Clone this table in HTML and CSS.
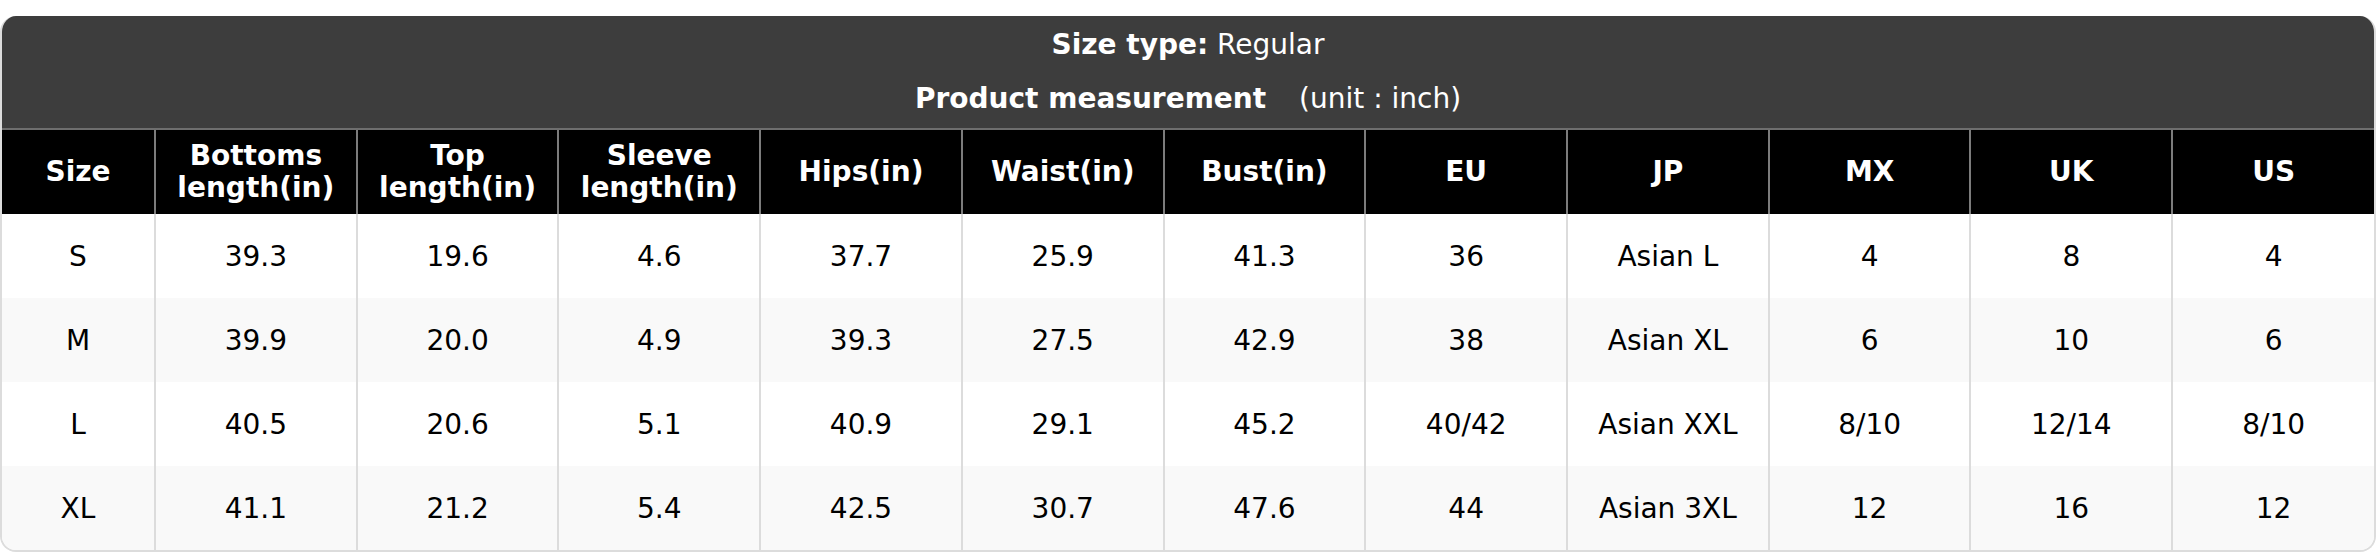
FILE: index.html
```html
<!DOCTYPE html>
<html lang="en">
<head>
<meta charset="utf-8">
<title>Size chart</title>
<link rel="stylesheet" href="styles.css">
</head>
<body>
<div class="card">
  <div class="title">
    <div class="title-line"><strong>Size type:</strong> Regular</div>
    <div class="title-line"><strong class="pm">Product measurement</strong> (unit : inch)</div>
  </div>
  <table class="chart">
    <colgroup>
      <col class="c-size">
      <col><col><col><col><col><col><col><col><col><col><col>
    </colgroup>
    <thead>
      <tr>
        <th>Size</th>
        <th>Bottoms<br>length(in)</th>
        <th>Top<br>length(in)</th>
        <th>Sleeve<br>length(in)</th>
        <th>Hips(in)</th>
        <th>Waist(in)</th>
        <th>Bust(in)</th>
        <th>EU</th>
        <th>JP</th>
        <th>MX</th>
        <th>UK</th>
        <th>US</th>
      </tr>
    </thead>
    <tbody>
      <tr><td>S</td><td>39.3</td><td>19.6</td><td>4.6</td><td>37.7</td><td>25.9</td><td>41.3</td><td>36</td><td>Asian L</td><td>4</td><td>8</td><td>4</td></tr>
      <tr><td>M</td><td>39.9</td><td>20.0</td><td>4.9</td><td>39.3</td><td>27.5</td><td>42.9</td><td>38</td><td>Asian XL</td><td>6</td><td>10</td><td>6</td></tr>
      <tr><td>L</td><td>40.5</td><td>20.6</td><td>5.1</td><td>40.9</td><td>29.1</td><td>45.2</td><td>40/42</td><td>Asian XXL</td><td>8/10</td><td>12/14</td><td>8/10</td></tr>
      <tr><td>XL</td><td>41.1</td><td>21.2</td><td>5.4</td><td>42.5</td><td>30.7</td><td>47.6</td><td>44</td><td>Asian 3XL</td><td>12</td><td>16</td><td>12</td></tr>
    </tbody>
  </table>
</div>
</body>
</html>
```
FILE: styles.css
```css
html, body {
  margin: 0;
  padding: 0;
  background: #ffffff;
}
body {
  padding-top: 16px;
  font-family: "DejaVu Sans", Verdana, sans-serif;
  font-size: 28px;
  color: #000;
}
.card {
  border: 2px solid #dcdcdc;
  border-top: 0;
  border-radius: 16px;
  overflow: hidden;
  box-sizing: border-box;
  width: 2376px;
}
.title {
  background: #3d3d3d;
  color: #ffffff;
  text-align: center;
  padding: 2px 0 2px;
}
.title-line {
  height: 54px;
  line-height: 54px;
}
.title strong {
  font-weight: bold;
}
.title .pm {
  margin-right: 24px;
}
.chart {
  width: 100%;
  border-collapse: collapse;
  table-layout: fixed;
}
.c-size {
  width: 153px;
}
.chart th {
  background: #000;
  color: #fff;
  font-weight: bold;
  height: 84px;
  padding: 0;
  line-height: 32px;
  border-top: 2px solid #6e6e6e;
  border-left: 2px solid #7c7c7c;
  vertical-align: middle;
}
.chart td {
  height: 84px;
  padding: 0;
  text-align: center;
  border-left: 2px solid #dcdcdc;
  vertical-align: middle;
}
.chart th:first-child,
.chart td:first-child {
  border-left: 0;
}
.chart tbody tr:nth-child(even) td {
  background: #f9f9f9;
}
```
